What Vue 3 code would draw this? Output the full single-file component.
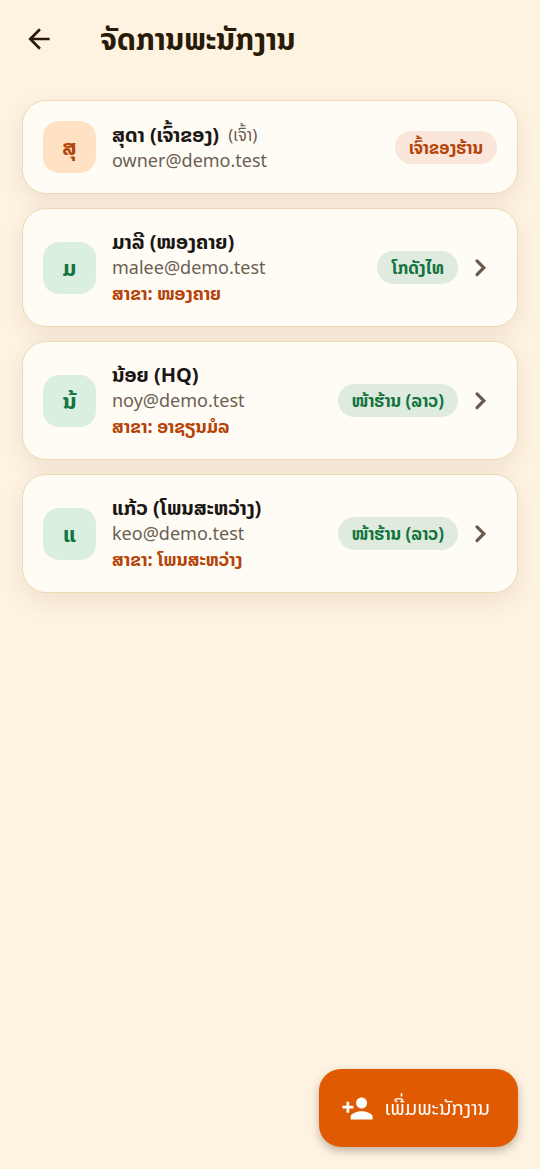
<script setup>
const staff = [
  { initial: 'ສຸ', name: 'ສຸດາ (ເຈົ້າຂອງ)', self: '(ເຈົ້າ)', email: 'owner@demo.test', role: 'ເຈົ້າຂອງຮ້ານ', owner: true },
  { initial: 'ມ', name: 'ມາລີ (ໜອງຄາຍ)', email: 'malee@demo.test', branch: 'ສາຂາ: ໜອງຄາຍ', role: 'ໂກດັງໄທ' },
  { initial: 'ນ້', name: 'ນ້ອຍ (HQ)', email: 'noy@demo.test', branch: 'ສາຂາ: ອາຊຽນມໍລ', role: 'ໜ້າຮ້ານ (ລາວ)' },
  { initial: 'ແ', name: 'ແກ້ວ (ໂພນສະຫວ່າງ)', email: 'keo@demo.test', branch: 'ສາຂາ: ໂພນສະຫວ່າງ', role: 'ໜ້າຮ້ານ (ລາວ)' },
]
</script>

<template>
  <div class="page">
    <header class="bar">
      <button class="back" type="button" aria-label="ກັບຄືນ">
        <svg viewBox="0 0 24 24" aria-hidden="true">
          <path d="M20 11H7.83l5.59-5.59L12 4l-8 8 8 8 1.41-1.41L7.83 13H20v-2z" />
        </svg>
      </button>
      <h1>ຈັດການພະນັກງານ</h1>
    </header>

    <main class="list">
      <component
        :is="person.owner ? 'article' : 'button'"
        v-for="person in staff"
        :key="person.email"
        class="card"
        :class="{ owner: person.owner }"
        :type="person.owner ? undefined : 'button'"
      >
        <span class="avatar">{{ person.initial }}</span>
        <span class="info">
          <span class="name">
            <strong>{{ person.name }}</strong>
            <span v-if="person.self" class="self">{{ person.self }}</span>
          </span>
          <span class="email">{{ person.email }}</span>
          <span v-if="person.branch" class="branch">{{ person.branch }}</span>
        </span>
        <span class="role">{{ person.role }}</span>
        <svg v-if="!person.owner" class="chevron" viewBox="0 0 24 24" aria-hidden="true">
          <path d="M9 6.7 14.1 11.8 9 16.9" />
        </svg>
      </component>
    </main>

    <button class="add" type="button">
      <svg viewBox="0 0 24 24" aria-hidden="true">
        <path d="M15 12c2.21 0 4-1.79 4-4s-1.79-4-4-4-4 1.79-4 4 1.79 4 4 4zm-9-2V7H4v3H1v2h3v3h2v-3h3v-2H6zm9 4c-2.67 0-8 1.34-8 4v2h16v-2c0-2.66-5.33-4-8-4z" />
      </svg>
      <span>ເພີ່ມພະນັກງານ</span>
    </button>
  </div>
</template>

<style>
body {
  background: #fef2e1;
}
</style>

<style scoped>
.page {
  min-height: 100vh;
  box-sizing: border-box;
  padding-bottom: 120px;
  background: #fef2e1;
  color: #1b1714;
  font-family: "Noto Sans", "Noto Sans Lao", "DejaVu Sans", sans-serif;
}

button {
  font-family: inherit;
  color: inherit;
  border: 0;
  cursor: pointer;
}

.bar {
  display: flex;
  align-items: center;
  gap: 31px;
  height: 78px;
  padding: 0 9px;
}

.back {
  display: grid;
  place-items: center;
  width: 60px;
  height: 60px;
  padding: 0;
  background: none;
}

.back svg {
  width: 32px;
  height: 32px;
  fill: #2a1a08;
}

h1 {
  margin: 0;
  font-size: 30px;
  line-height: 40px;
  font-weight: 700;
  color: #2a1a08;
  white-space: nowrap;
}

.list {
  display: flex;
  flex-direction: column;
  gap: 14px;
  padding: 22px 22px 0;
}

.card {
  display: flex;
  align-items: center;
  box-sizing: border-box;
  width: 100%;
  padding: 20px;
  border: 1px solid #eed9b3;
  border-radius: 24px;
  background: #fffcf5;
  box-shadow: 0 8px 24px rgba(90, 50, 20, 0.09);
  text-align: left;
}

.avatar {
  display: grid;
  place-items: center;
  flex: none;
  box-sizing: border-box;
  width: 53px;
  height: 52px;
  padding-bottom: 2px;
  border-radius: 16px;
  background: #daefe0;
  color: #14743f;
  font-size: 22px;
  line-height: 28px;
  font-weight: 700;
}

.owner .avatar {
  background: #ffe1c4;
  color: #b5440a;
}

.info {
  display: flex;
  flex-direction: column;
  flex: 1;
  min-width: 0;
  margin-left: 16px;
  white-space: nowrap;
}

.name {
  display: flex;
  align-items: center;
  gap: 9px;
  font-size: 20px;
  line-height: 25px;
}

.name strong {
  font-weight: 700;
}

.self {
  font-size: 17px;
  color: #6b5f52;
}

.email {
  font-size: 18px;
  line-height: 26px;
  color: #6b5f52;
}

.branch {
  font-size: 18px;
  line-height: 26px;
  font-weight: 700;
  color: #b5440a;
}

.role {
  flex: none;
  padding: 4px 14px;
  border-radius: 17px;
  background: #e0ebe0;
  color: #14743f;
  font-size: 17px;
  line-height: 25px;
  font-weight: 700;
  white-space: nowrap;
}

.owner .role {
  background: #fae6da;
  color: #b5440a;
}

.chevron {
  flex: none;
  width: 32px;
  height: 32px;
  margin-left: 7px;
  fill: none;
  stroke: #6b5a4c;
  stroke-width: 2.4;
  stroke-linecap: round;
}

.add {
  position: fixed;
  right: 22px;
  bottom: 22px;
  display: flex;
  align-items: center;
  gap: 11px;
  height: 78px;
  padding: 0 28px 0 22px;
  border-radius: 22px;
  background: #df5a00;
  color: #fff;
  font-size: 20px;
  line-height: 28px;
  white-space: nowrap;
  box-shadow: 0 4px 8px rgba(60, 40, 20, 0.3);
}

.add svg {
  width: 33px;
  height: 33px;
  fill: #fff;
}
</style>
